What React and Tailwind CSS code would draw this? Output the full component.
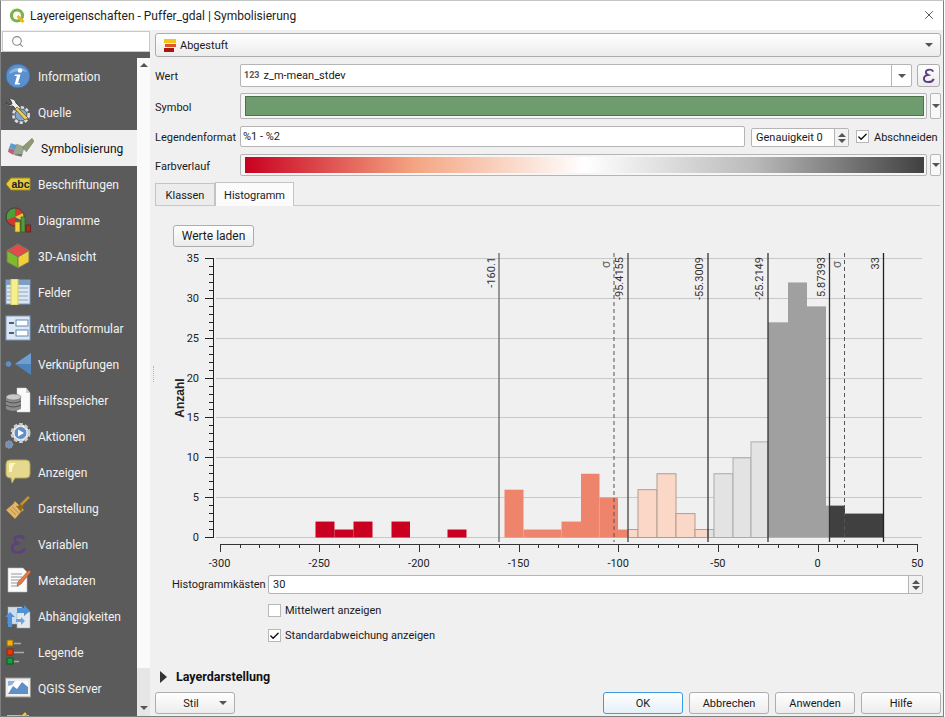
import { Search, X, Check } from "lucide-react";

function Info() {
  return (
    <svg width="26" height="26" viewBox="0 0 26 26">
      <circle cx="13" cy="13" r="12" fill="#5c90cc" stroke="#3f6ea8" />
      <path d="M4 11a10 9 0 0 1 18 -2q-9 -3 -18 2z" fill="#8db4e0" />
      <circle cx="15" cy="7.5" r="2.3" fill="#fff" />
      <path d="M10 11.5h5.5l-2.4 8.5h2l-.5 1.5h-5l2.300 -8.500h-2.300z" fill="#fff" />
    </svg>
  );
}

function Quelle() {
  return (
    <svg width="26" height="26" viewBox="0 0 26 26">
      <path d="M1 3l3 3 3 -1 -1 -3 -2 -2q6 -1 7 4l5 5 -3 3 -5 -5q-6 1 -7 -4z" fill="#eee" stroke="#333" strokeWidth=".8" />
      <circle cx="16" cy="16" r="7.500" fill="#6f93bd" stroke="#ddd" strokeWidth="3" strokeDasharray="3 2" />
      <circle cx="16" cy="16" r="6" fill="#7fa3cc" stroke="#333" strokeWidth=".6" />
      <path d="M10 10l10 11 3 -2 -11 -11z" fill="#e8c95a" stroke="#6b5a1a" strokeWidth=".7" />
    </svg>
  );
}

function Brush() {
  return (
    <svg width="27" height="26" viewBox="0 0 27 26">
      <path d="M3 8l6 2 -2 5 -6 -2z" fill="#5a9bd0" />
      <path d="M1 13l6 2 -2 5 -5 -3z" fill="#c45c7a" />
      <path d="M9 9l8 3 -3 9 -9 -2z" fill="#98a88c" stroke="#77806e" strokeWidth=".5" />
      <path d="M15 12l10 -9 2 3 -8 11z" fill="#8f9a70" stroke="#666" strokeWidth=".5" />
      <path d="M5 20l9 2 1 -3z" fill="#777" />
    </svg>
  );
}

function Abc() {
  return (
    <svg width="26" height="26" viewBox="0 0 26 26">
      <path d="M6 7h19v12h-19l-5 -6z" fill="#e5cb3d" stroke="#9c8a18" />
      <text x="6.500" y="16.500" fontSize="10.500" fontWeight="700" fontFamily="Liberation Sans" fill="#222">abc</text>
    </svg>
  );
}

function Diagramm() {
  return (
    <svg width="26" height="26" viewBox="0 0 26 26">
      <path d="M10 1a9 9 0 0 1 8 5l-8 4z" fill="#d63b2a" />
      <path d="M10 1a9 9 0 0 0 -8 12l8 -3z" fill="#4f9e3a" />
      <path d="M2 13a9 9 0 0 0 8 6v-9z" fill="#d8342a" />
      <path d="M10 10l8 -4a9 9 0 0 1 0 8z" fill="#e8c83a" />
      <path d="M10 1a9 9 0 1 0 .1 0" fill="none" stroke="#333" strokeWidth=".8" />
      <rect x="10" y="15" width="5" height="10" fill="#f0d33a" stroke="#8a7414" strokeWidth=".7" />
      <rect x="16" y="10" width="4" height="15" fill="#4f9e3a" stroke="#2c5e20" strokeWidth=".7" />
      <rect x="21" y="18" width="4.500" height="7" fill="#a92d22" stroke="#5e1710" strokeWidth=".7" />
    </svg>
  );
}

function Cube() {
  return (
    <svg width="26" height="26" viewBox="0 0 26 26">
      <path d="M13 1l11 6.500 -11 6.500 -11 -6.500z" fill="#e14b4b" stroke="#7a7a5a" />
      <path d="M2 7.500l11 6.500v11l-11 -6z" fill="#7dbb2e" stroke="#7a7a5a" />
      <path d="M24 7.500l-11 6.500v11l11 -6z" fill="#f0cf3a" stroke="#7a7a5a" />
    </svg>
  );
}

function Felder() {
  return (
    <svg width="26" height="26" viewBox="0 0 26 26">
      <rect x="1" y="1" width="24" height="24" fill="#dce7f3" stroke="#7c9cbf" />
      <rect x="1" y="1" width="24" height="5" fill="#7c9fc6" />
      <path d="M13 9h10M13 13h10M13 17h10M13 21h10M2 9h4M2 13h4M2 17h4M2 21h4" stroke="#8aa5c4" />
      <rect x="6" y="0" width="7" height="26" fill="#f7ef8c" stroke="#d8cf5c" />
    </svg>
  );
}

function Formular() {
  return (
    <svg width="26" height="26" viewBox="0 0 26 26">
      <rect x="1" y="1" width="24" height="24" fill="#dce7f3" stroke="#7c9cbf" />
      <rect x="11" y="5" width="12" height="6" fill="#fff" stroke="#5f8ab8" />
      <rect x="11" y="15" width="12" height="6" fill="#fff" stroke="#5f8ab8" />
      <path d="M4 8h5M4 18h5" stroke="#4a5f78" strokeWidth="2" />
    </svg>
  );
}

function Join() {
  return (
    <svg width="26" height="26" viewBox="0 0 26 26">
      <circle cx="3.500" cy="13" r="2.800" fill="#5d8fc4" />
      <path d="M26 2v22l-16 -11z" fill="#4f82b8" />
      <path d="M26 2v11h-16z" fill="#6f9fd0" />
    </svg>
  );
}

function Cache() {
  return (
    <svg width="26" height="26" viewBox="0 0 26 26">
      <path d="M12 1h9l4 5v19h-13z" fill="#fafafa" stroke="#ccc" strokeWidth=".5" />
      <path d="M21 1v5h4z" fill="#cfcfcf" />
      <path d="M1 10v12q7 4 15 0v-12z" fill="#8a8a8a" />
      <ellipse cx="8.500" cy="10" rx="7.500" ry="3" fill="#c9c9c9" stroke="#666" strokeWidth=".5" />
      <path d="M1 14q7 4 15 0M1 18q7 4 15 0" fill="none" stroke="#444" strokeWidth=".8" />
    </svg>
  );
}

function Action() {
  return (
    <svg width="26" height="26" viewBox="0 0 26 26">
      <circle cx="15.500" cy="10" r="8.500" fill="#eee" stroke="#ccc" strokeWidth="3" strokeDasharray="3.500 2" />
      <circle cx="15.500" cy="10" r="6.500" fill="#5f90c8" stroke="#eee" />
      <path d="M13 6.500l6 3.500 -6 3.500z" fill="#fff" />
      <circle cx="4" cy="21.500" r="3.500" fill="#6d93c0" stroke="#999" strokeWidth="1.500" strokeDasharray="1.500 1" />
    </svg>
  );
}

function Bubble() {
  return (
    <svg width="26" height="26" viewBox="0 0 26 26">
      <path d="M5 1h16q4 0 4 4v10q0 4 -4 4h-11l-3 5 -1 -5q-5 0 -5 -4v-10q0 -4 4 -4z" fill="#e5d98d" stroke="#b3a557" />
      <path d="M5 4h6q-4 2 -4 9h-3v-6q0 -3 1 -3z" fill="#fff6c8" />
    </svg>
  );
}

function Broom() {
  return (
    <svg width="26" height="26" viewBox="0 0 26 26">
      <path d="M15 9l8 -8 1.800 1.800 -8 8z" fill="#c89430" />
      <path d="M10 6l9 9 -3 2 -6 7 -9 -9 7 -6z" fill="#e2b66a" stroke="#9b7430" strokeWidth=".6" />
      <path d="M11 11l8 -1 -3 7z" fill="#8f6a22" />
      <path d="M5 14l6 6M7.500 12l6 6" stroke="#b88c42" />
    </svg>
  );
}

function Epsilon({ size = 22 }) {
  return (
    <svg width={size} height={size} viewBox="0 0 26 26" fill="none">
      <path d="M20 7q-1 -3 -5 -3q-6 0 -6 4q0 3 4 4q-7 1 -7 6q0 5 7 5q6 0 8 -5" stroke="#5e3f7f" strokeWidth="3" />
      <path d="M11 12.500h5" stroke="#5e3f7f" strokeWidth="2" />
    </svg>
  );
}

function Meta() {
  return (
    <svg width="26" height="26" viewBox="0 0 26 26">
      <path d="M3 1h15l4 4v20h-19z" fill="#fbfbfb" stroke="#bbb" strokeWidth=".6" />
      <path d="M6 7h11M6 10h11M6 13h9M6 16h8M6 19h8" stroke="#999" />
      <path d="M24 3l2 2 -10 12 -4 2 1 -4z" fill="#e47a46" stroke="#a85128" strokeWidth=".6" />
    </svg>
  );
}

function Depends() {
  return (
    <svg width="26" height="26" viewBox="0 0 26 26">
      <rect x="3" y="4" width="14" height="17" fill="#cfdcea" stroke="#9ab" strokeWidth=".5" />
      <rect x="12" y="9" width="13" height="16" fill="#e4e8ec" stroke="#9ab" strokeWidth=".5" />
      <path d="M0 14l5 -5 5 5h-3v10h-4v-10z" fill="#4f92d8" />
      <path d="M12 5h7v-3l6 6 -6 5v-3h-7z" fill="#4f92d8" />
      <path d="M11 19h5v3l4 -4 -4 -4v2h-5z" fill="#6ca6e0" />
    </svg>
  );
}

function Legende() {
  return (
    <svg width="26" height="26" viewBox="0 0 26 26">
      <rect x="2" y="1" width="6" height="6" fill="#f3b116" stroke="#8a6a10" />
      <rect x="2" y="10" width="6" height="6" fill="#e8380c" stroke="#8a2a10" />
      <rect x="2" y="19" width="6" height="6" fill="#15a23c" stroke="#0c5a20" />
      <path d="M9 4.500h7M9 13.500h10M9 22.500h5" stroke="#aaa" strokeWidth="1.500" />
    </svg>
  );
}

function Server() {
  return (
    <svg width="26" height="26" viewBox="0 0 26 26">
      <rect x="0.500" y="3" width="25" height="19" fill="#eee" stroke="#999" />
      <rect x="3" y="6" width="20" height="13" fill="#fff" />
      <path d="M3 19l5 -8 4 3 5 -7 6 5v7z" fill="#5d8fc8" />
      <path d="M3 6h7l-3 4 -4 1z" fill="#8db4e0" />
    </svg>
  );
}

function Digit() {
  return (
    <svg width="26" height="26" viewBox="0 0 26 26">
      <path d="M2 5h22" stroke="#ddd" strokeWidth="1.500" />
      <path d="M15 6l5 -5 2 2 -5 5z" fill="#e8c95a" stroke="#8a7414" strokeWidth=".5" />
    </svg>
  );
}

const navItems = [
  { label: "Information", icon: <Info /> },
  { label: "Quelle", icon: <Quelle /> },
  { label: "Symbolisierung", icon: <Brush />, active: true },
  { label: "Beschriftungen", icon: <Abc /> },
  { label: "Diagramme", icon: <Diagramm /> },
  { label: "3D-Ansicht", icon: <Cube /> },
  { label: "Felder", icon: <Felder /> },
  { label: "Attributformular", icon: <Formular /> },
  { label: "Verknüpfungen", icon: <Join /> },
  { label: "Hilfsspeicher", icon: <Cache /> },
  { label: "Aktionen", icon: <Action /> },
  { label: "Anzeigen", icon: <Bubble /> },
  { label: "Darstellung", icon: <Broom /> },
  { label: "Variablen", icon: <Epsilon /> },
  { label: "Metadaten", icon: <Meta /> },
  { label: "Abhängigkeiten", icon: <Depends /> },
  { label: "Legende", icon: <Legende /> },
  { label: "QGIS Server", icon: <Server /> },
  { label: "", icon: <Digit /> },
];

function NavItem({ label, icon, active }) {
  return (
    <div
      className={`flex h-9 shrink-0 items-center gap-[7px] text-[12px] ${
        active ? "bg-[#f0f0f0] pl-[7px] text-[#111]" : "pl-1 text-[#f2f2f2]"
      }`}
    >
      <span className="flex w-[26px] shrink-0 justify-center">{icon}</span>
      <span className="pt-0.5">{label}</span>
    </div>
  );
}

function Caret({ className = "" }) {
  return (
    <span
      className={`block h-0 w-0 border-x-[4px] border-t-[4px] border-x-transparent border-t-[#555] ${className}`}
    />
  );
}

function Button({ className = "", children }) {
  return (
    <div
      className={`flex h-[22px] items-center rounded-[3px] border border-[#adadad] bg-linear-to-b from-white to-[#ececec] text-[#1a1a1a] ${className}`}
    >
      {children}
    </div>
  );
}

function CheckBox({ checked }) {
  return (
    <span className="flex h-[13px] w-[13px] shrink-0 items-center justify-center border border-[#b8b8b8] bg-white">
      {checked && <Check size={12} strokeWidth={3} className="text-[#111]" />}
    </span>
  );
}

// chart data in page coordinates
const xOf = (v) => 817.5 + 1.993 * v;
const yOf = (v) => 536.5 - 7.97 * v;

const bars = [
  [315.5, 334.5, 2, "#ca0020"],
  [334.5, 353.5, 1, "#ca0020"],
  [353.5, 372.5, 2, "#ca0020"],
  [391.5, 410, 2, "#ca0020"],
  [447.5, 466.5, 1, "#ca0020"],
  [504.5, 523.5, 6, "#ef846c"],
  [523.5, 561.5, 1, "#ef846c"],
  [561.5, 581, 2, "#ef846c"],
  [581, 599.5, 8, "#ef846c"],
  [599.5, 618, 5, "#ef846c"],
  [618, 628, 1, "#ef846c"],
  [628, 638, 1, "#fbd7c7", "#b49c92"],
  [638, 657, 6, "#fbd7c7", "#b49c92"],
  [657, 676, 8, "#fbd7c7", "#b49c92"],
  [676, 695, 3, "#fbd7c7", "#b49c92"],
  [695, 708, 1, "#fbd7c7", "#b49c92"],
  [708, 714, 1, "#e3e3e3", "#ababab"],
  [714, 733, 8, "#e3e3e3", "#ababab"],
  [733, 751, 10, "#e3e3e3", "#ababab"],
  [751, 768, 12, "#e3e3e3", "#ababab"],
  [768, 788, 27, "#a0a0a0"],
  [788, 807, 32, "#a0a0a0"],
  [807, 826, 29, "#a0a0a0"],
  [826, 830, 4, "#a0a0a0"],
  [830, 845, 4, "#404040"],
  [845, 883.5, 3, "#404040"],
];

const breaks = [
  { x: 499, label: "-160.1", color: "#666", textX: 495 },
  { x: 628, label: "-95.4155", color: "#444", textX: 623 },
  { x: 708, label: "-55.3009", color: "#333", textX: 703 },
  { x: 768, label: "-25.2149", color: "#333", textX: 763 },
  { x: 829.5, label: "5.87393", color: "#333", textX: 825 },
  { x: 883.5, label: "33", color: "#222", textX: 879 },
];

function Histogram() {
  const yMinor = Array.from({ length: 36 }, (_, i) => i);
  const xMinor = Array.from({ length: 36 }, (_, i) => -300 + i * 10);
  return (
    <svg
      width="770"
      height="320"
      viewBox="165 250 770 320"
      fontFamily="Roboto, sans-serif"
      fontSize="11"
      fill="#222"
    >
      {[0, 5, 10, 15, 20, 25, 30, 35].map((v) => (
        <g key={v}>
          <path d={`M216 ${Math.floor(yOf(v)) + 0.5}H922`} stroke="#c8c8c8" />
          <text x="199" y={yOf(v) + 3.500} textAnchor="end">{v}</text>
        </g>
      ))}
      {bars.map(([x1, x2, v, fill, stroke]) => (
        <rect
          key={x1}
          x={x1}
          y={yOf(v)}
          width={x2 - x1}
          height={7.97 * v}
          fill={fill}
          stroke={stroke || "none"}
        />
      ))}
      {/* y axis */}
      <path d="M213.500 257V537" stroke="#222" />
      {yMinor.map((v) => (
        <path key={v} d={`M${v % 5 === 0 ? 205 : 209} ${Math.floor(yOf(v)) + 0.5}H214`} stroke="#222" />
      ))}
      <text
        transform="translate(184 397) rotate(-90)"
        textAnchor="middle"
        fontSize="12"
        fontWeight="700"
        fontFamily="Liberation Sans, sans-serif"
      >
        Anzahl
      </text>
      {/* x axis */}
      <path d="M220 543.500H918" stroke="#333" />
      {xMinor.map((v) => (
        <path
          key={v}
          d={`M${Math.round(xOf(v)) + 0.5} 543V${v % 50 === 0 ? 551 : 547}`}
          stroke="#333"
        />
      ))}
      {[-300, -250, -200, -150, -100, -50, 0, 50].map((v) => (
        <text key={v} x={xOf(v)} y="566" textAnchor="middle">{v}</text>
      ))}
      {/* class breaks */}
      {breaks.map((b) => (
        <g key={b.label}>
          <path d={`M${b.x} 252V541`} stroke={b.color} strokeWidth="1.300" />
          <text
            transform={`translate(${b.textX} 256) rotate(-90)`}
            textAnchor="end"
            fill="#333"
          >
            {b.label}
          </text>
        </g>
      ))}
      {/* standard deviation */}
      {[614, 844.5].map((x) => (
        <g key={x}>
          <path d={`M${x} 252V541`} stroke="#555" strokeDasharray="4 3" />
          <text transform={`translate(${x - 4} 267) rotate(-90)`} fontSize="12" fill="#666">σ</text>
        </g>
      ))}
    </svg>
  );
}

export default function App() {
  return (
    <div className="flex h-[717px] w-[944px] flex-col overflow-hidden border border-[#7f7f7f] border-t-[#c4c4c4] bg-[#f0f0f0] font-['Roboto',sans-serif] text-[11px] leading-none text-[#1a1a1a]">

      {/* TITLE BAR */}

      <div className="flex h-[29px] shrink-0 items-center bg-white pr-[7px] pl-2 text-[12px]">
        <svg width="16" height="16" viewBox="0 0 16 16" fill="none">
          <circle cx="8" cy="7.500" r="5.500" stroke="#7cb342" strokeWidth="3.200" />
          <path d="M8.500 8l6 6" stroke="#efb521" strokeWidth="3" />
        </svg>
        <span className="ml-[5px] text-[#222]">Layereigenschaften - Puffer_gdal | Symbolisierung</span>
        <X size={14} strokeWidth={1.3} className="ml-auto -translate-y-px text-[#222]" />
      </div>

      <div className="flex min-h-0 flex-1">

        {/* SIDEBAR */}

        <div className="flex w-[149px] shrink-0 flex-col">
          <div className="flex h-[22px] shrink-0 items-center pl-px">
            <div className="flex h-[21px] flex-1 items-center border border-[#c8c8c8] bg-white pl-2">
              <Search size={13} className="text-[#888]" />
            </div>
          </div>
          <div className="flex min-h-0 flex-1 bg-[#5b5b5b]">
            <div className="flex w-[136px] flex-col overflow-hidden pt-[6px]">
              {navItems.map((item) => (
                <NavItem key={item.label} {...item} />
              ))}
            </div>
            <div className="mt-[6px] flex w-[13px] flex-col bg-[#fafafa]">
              <div className="flex h-[14px] items-center justify-center">
                <Caret className="rotate-180" />
              </div>
              <div className="mt-auto flex h-[48px] items-end justify-center bg-[#e6e6e6] pb-[6px]">
                <Caret />
              </div>
            </div>
          </div>
        </div>

        {/* MAIN */}

        <div className="relative flex min-w-0 flex-1 flex-col pt-[3px] pr-[2px] pl-[5px]">

          {/* splitter handle */}
          <span className="absolute top-[336px] left-[3px] h-[16px] border-l border-dotted border-[#b5b5b5]" />

          <Button className="h-[24px]! justify-between pr-[7px] pl-2">
            <span className="flex items-center gap-[4px]">
              <span className="flex w-[12px] flex-col">
                <span className="h-[4px] bg-[#f5c518]" />
                <span className="ml-px h-[4px] border-t border-[#f0f0f0] bg-[#e2562a]" />
                <span className="mr-0.5 h-[5px] border-t border-[#f0f0f0] bg-[#a5160e]" />
              </span>
              Abgestuft
            </span>
            <Caret />
          </Button>

          <div className="mt-[7px] flex h-[23px] items-center">
            <span className="w-[85px] shrink-0 pt-0.5">Wert</span>
            <div className="flex h-full w-[672px] items-center rounded-[2px] border border-[#b5b5b5] bg-white pl-[3px]">
              <span className="mr-1 text-[9px] font-bold text-[#555]">123</span>
              <span>z_m-mean_stdev</span>
              <span className="ml-auto flex h-full w-[20px] items-center justify-center border-l border-[#b5b5b5]">
                <Caret />
              </span>
            </div>
            <Button className="ml-[5px] h-[23px]! w-[23px] justify-center">
              <Epsilon size={17} />
            </Button>
          </div>

          <div className="mt-[6px] flex h-[26px] items-center">
            <span className="w-[85px] shrink-0 pt-[3px]">Symbol</span>
            <div className="flex h-full w-[687px] items-center rounded-[2px] border border-[#b5b5b5] bg-[#f6f6f6] pr-[2px] pl-1">
              <div className="h-[20px] flex-1 border border-[#4d704d] bg-[#6f9c6f]" />
            </div>
            <div className="ml-[3px] flex h-full w-[11px] items-center justify-center rounded-[2px] border border-[#b5b5b5] bg-[#f8f8f8]">
              <Caret />
            </div>
          </div>

          <div className="mt-[7px] flex h-[21px] items-center">
            <span className="w-[85px] shrink-0 pt-0.5 whitespace-nowrap">Legendenformat</span>
            <div className="flex h-full w-[505px] items-center rounded-[2px] border border-[#b5b5b5] bg-white pl-[2px]">
              %1 - %2
            </div>
            <div className="mt-0.5 ml-[6px] flex h-[19px] w-[98px] items-center rounded-[2px] border border-[#b5b5b5] bg-white pl-1 whitespace-nowrap">
              Genauigkeit 0
              <span className="ml-auto flex h-full w-[14px] flex-col items-center justify-center gap-[2px] border-l border-[#b5b5b5] bg-[#f2f2f2]">
                <Caret className="rotate-180" />
                <Caret />
              </span>
            </div>
            <span className="ml-[7px]"><CheckBox checked /></span>
            <span className="ml-[5px] pt-px">Abschneiden</span>
          </div>

          <div className="mt-[7px] flex h-[22px] items-center">
            <span className="w-[85px] shrink-0 pt-0.5">Farbverlauf</span>
            <div className="flex h-full w-[687px] items-center rounded-[2px] border border-[#b5b5b5] bg-[#f6f6f6] pr-[2px] pl-1">
              <div className="h-[16px] flex-1 bg-[linear-gradient(to_right,#ca0020,#f4a582_25%,#ffffff_50%,#bababa_75%,#404040)]" />
            </div>
            <div className="ml-[3px] flex h-full w-[11px] items-center justify-center rounded-[2px] border border-[#b5b5b5] bg-[#f8f8f8]">
              <Caret />
            </div>
          </div>

          {/* TABS */}

          <div className="mt-[6px] mr-px flex h-[24px] items-end border-b border-[#c8c8c8]">
            <div className="flex h-[22px] w-[60px] items-center justify-center border border-b-0 border-[#c4c4c4] bg-[#ececec] pt-0.5">
              Klassen
            </div>
            <div className="-mb-px flex h-[24px] w-[79px] items-center justify-center border border-b-0 border-[#c4c4c4] bg-[#fbfbfb] pt-0.5">
              Histogramm
            </div>
          </div>

          <div className="flex flex-col pt-[19px] pl-[10px]">
            <Button className="ml-2 w-[81px] justify-center text-[12px]">Werte laden</Button>
            <div className="mt-[4px] h-[320px]">
              <Histogram />
            </div>
            <div className="mt-[4px] flex h-[19px] items-center pl-[7px]">
              <span className="w-[96px] shrink-0 whitespace-nowrap">Histogrammkästen</span>
              <div className="flex h-full w-[655px] items-center rounded-[2px] border border-[#b5b5b5] bg-white pl-1">
                30
                <span className="ml-auto flex h-full w-[14px] flex-col items-center justify-center gap-[2px] border-l border-[#b5b5b5] bg-[#f2f2f2]">
                  <Caret className="rotate-180" />
                  <Caret />
                </span>
              </div>
            </div>
            <div className="mt-[10px] flex h-[13px] items-center gap-[4px] pl-[103px]">
              <CheckBox />
              Mittelwert anzeigen
            </div>
            <div className="mt-[12px] flex h-[13px] items-center gap-[4px] pl-[103px]">
              <CheckBox checked />
              Standardabweichung anzeigen
            </div>
          </div>

          <div className="mt-[29px] flex h-[12px] items-center gap-[9px] pl-[5px] text-[12.5px] font-bold text-[#111]">
            <span className="block h-0 w-0 border-y-[6px] border-l-[7px] border-y-transparent border-l-[#333]" />
            Layerdarstellung
          </div>

          {/* BUTTONS */}

          <div className="mt-[9px] flex items-center">
            <Button className="relative w-[80px] justify-center">
              <span className="-ml-2">Stil</span>
              <Caret className="absolute right-[7px]" />
            </Button>
            <div className="ml-auto flex gap-[6px]">
              <Button className="w-[80px] justify-center border-[#3d9be0]! to-[#e6f0f8]!">OK</Button>
              <Button className="w-[80px] justify-center">Abbrechen</Button>
              <Button className="w-[80px] justify-center">Anwenden</Button>
              <Button className="w-[80px] justify-center">Hilfe</Button>
            </div>
          </div>

        </div>
      </div>
    </div>
  );
}
